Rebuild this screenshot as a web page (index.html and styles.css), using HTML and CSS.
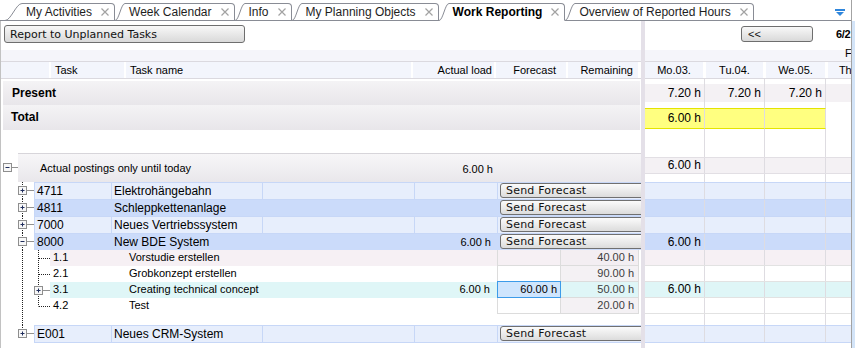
FILE: index.html
```html
<!DOCTYPE html>
<html lang="en">
<head>
    <meta charset="UTF-8">
    <meta name="viewport" content="width=device-width, initial-scale=1.0">
    <title>Work Reporting</title>
    <link rel="stylesheet" href="styles.css">
</head>
<body>
<div class="page">
    <div class="content">
        <!-- Tab strip -->
        <div class="tabbar">
            <div class="tab">
                <svg class="slant" width="17" height="18" viewBox="0 0 17 18"><path class="slant-fill" d="M0 18V17.5C6 17.5 11 0.5 17 0.5V18Z"/><path class="slant-line" d="M0 17.5C6 17.5 11 0.5 17 0.5"/><path class="slant-base" d="M0 17.5H17"/></svg>
                <div class="tab-body"><span class="tab-label">My Activities</span><svg class="tab-close" width="8" height="8"><path d="M0.5 0.5L7.5 7.5M7.5 0.5L0.5 7.5"/></svg></div>
            </div>
            <div class="tab">
                <svg class="slant" width="10" height="18" viewBox="0 0 10 18"><path class="slant-fill" d="M0 18V17.5C4 17.5 6 0.5 10 0.5V18Z"/><path class="slant-line" d="M0 17.5C4 17.5 6 0.5 10 0.5"/><path class="slant-base" d="M0 17.5H10"/></svg>
                <div class="tab-body"><span class="tab-label">Week Calendar</span><svg class="tab-close" width="8" height="8"><path d="M0.5 0.5L7.5 7.5M7.5 0.5L0.5 7.5"/></svg></div>
            </div>
            <div class="tab">
                <svg class="slant" width="10" height="18" viewBox="0 0 10 18"><path class="slant-fill" d="M0 18V17.5C4 17.5 6 0.5 10 0.5V18Z"/><path class="slant-line" d="M0 17.5C4 17.5 6 0.5 10 0.5"/><path class="slant-base" d="M0 17.5H10"/></svg>
                <div class="tab-body"><span class="tab-label">Info</span><svg class="tab-close" width="8" height="8"><path d="M0.5 0.5L7.5 7.5M7.5 0.5L0.5 7.5"/></svg></div>
            </div>
            <div class="tab">
                <svg class="slant" width="10" height="18" viewBox="0 0 10 18"><path class="slant-fill" d="M0 18V17.5C4 17.5 6 0.5 10 0.5V18Z"/><path class="slant-line" d="M0 17.5C4 17.5 6 0.5 10 0.5"/><path class="slant-base" d="M0 17.5H10"/></svg>
                <div class="tab-body"><span class="tab-label">My Planning Objects</span><svg class="tab-close" width="8" height="8"><path d="M0.5 0.5L7.5 7.5M7.5 0.5L0.5 7.5"/></svg></div>
            </div>
            <div class="tab active">
                <svg class="slant" width="10" height="18" viewBox="0 0 10 18"><path class="slant-fill" d="M0 18V17.5C4 17.5 6 0.5 10 0.5V18Z"/><path class="slant-line" d="M0 17.5C4 17.5 6 0.5 10 0.5"/></svg>
                <div class="tab-body"><span class="tab-label">Work Reporting</span><svg class="tab-close" width="8" height="8"><path d="M0.5 0.5L7.5 7.5M7.5 0.5L0.5 7.5"/></svg></div>
            </div>
            <div class="tab">
                <svg class="slant" width="10" height="18" viewBox="0 0 10 18"><path class="slant-fill" d="M0 18V17.5C4 17.5 6 0.5 10 0.5V18Z"/><path class="slant-line" d="M0 17.5C4 17.5 6 0.5 10 0.5"/><path class="slant-base" d="M0 17.5H10"/></svg>
                <div class="tab-body"><span class="tab-label">Overview of Reported Hours</span><svg class="tab-close" width="8" height="8"><path d="M0.5 0.5L7.5 7.5M7.5 0.5L0.5 7.5"/></svg></div>
            </div>
            <svg class="tab-menu" width="10" height="7" viewBox="0 0 10 7"><rect x="0" y="0" width="10" height="2"/><path d="M1 3H9L5 7Z"/></svg>
        </div>

        <div class="main">
            <!-- Left: task table -->
            <div class="tasks">
                <div class="toolbar"><button class="btn">Report to Unplanned Tasks</button></div>
                <div class="strip"></div>
                <div class="head">
                    <div class="hc"></div>
                    <div class="hc">Task</div>
                    <div class="hc">Task name</div>
                    <div class="hc num">Actual load</div>
                    <div class="hc num fc-h">Forecast</div>
                    <div class="hc num rem-h">Remaining</div>
                </div>
                <div class="sum present">Present</div>
                <div class="sum total">Total</div>
                <div class="spacer"></div>

                <div class="group">
                    <svg class="tree" width="17" height="29" viewBox="0 0 17 29"><path class="dots" d="M10.5 14.5H17"/><rect class="box" x="2.5" y="10.5" width="8" height="8"/><path class="sign" d="M4.5 14.5h4"/></svg>
                    <div class="band">
                        <span class="band-label">Actual postings only until today</span>
                        <span class="band-val">6.00 h</span>
                    </div>
                </div>

                <div class="row light">
                    <svg class="tree" width="33" height="17" viewBox="0 0 33 17"><path class="dots" d="M21.5 0V17M25.5 8.5H33"/><rect class="box" x="17.5" y="4.5" width="8" height="8"/><path class="sign" d="M19.5 8.5h4M21.5 6.5v4"/></svg>
                    <div class="cells">
                        <div class="c">4711</div><div class="c">Elektrohängebahn</div><div class="c"></div><div class="c load"></div>
                        <div class="c fc"><button class="send">Send Forecast</button></div>
                    </div>
                </div>
                <div class="row dark">
                    <svg class="tree" width="33" height="17" viewBox="0 0 33 17"><path class="dots" d="M21.5 0V17M25.5 8.5H33"/><rect class="box" x="17.5" y="4.5" width="8" height="8"/><path class="sign" d="M19.5 8.5h4M21.5 6.5v4"/></svg>
                    <div class="cells">
                        <div class="c">4811</div><div class="c">Schleppkettenanlage</div><div class="c"></div><div class="c load"></div>
                        <div class="c fc"><button class="send">Send Forecast</button></div>
                    </div>
                </div>
                <div class="row light">
                    <svg class="tree" width="33" height="17" viewBox="0 0 33 17"><path class="dots" d="M21.5 0V17M25.5 8.5H33"/><rect class="box" x="17.5" y="4.5" width="8" height="8"/><path class="sign" d="M19.5 8.5h4M21.5 6.5v4"/></svg>
                    <div class="cells">
                        <div class="c">7000</div><div class="c">Neues Vertriebssystem</div><div class="c"></div><div class="c load"></div>
                        <div class="c fc"><button class="send">Send Forecast</button></div>
                    </div>
                </div>
                <div class="row dark">
                    <svg class="tree" width="33" height="17" viewBox="0 0 33 17"><path class="dots" d="M21.5 0V17M25.5 8.5H33"/><rect class="box" x="17.5" y="4.5" width="8" height="8"/><path class="sign" d="M19.5 8.5h4"/></svg>
                    <div class="cells">
                        <div class="c">8000</div><div class="c">New BDE System</div><div class="c"></div><div class="c load">6.00 h</div>
                        <div class="c fc"><button class="send">Send Forecast</button></div>
                    </div>
                </div>

                <div class="sub">
                    <svg class="tree" width="49" height="16" viewBox="0 0 49 16"><path class="dots" d="M21.5 0V16M37.5 0V16M38 8.5H49"/></svg>
                    <div class="scells pink">
                        <div class="s">1.1</div><div class="s">Vorstudie erstellen</div><div class="s load"></div>
                        <div class="s sfc"></div><div class="s srem">40.00 h</div>
                    </div>
                </div>
                <div class="sub">
                    <svg class="tree" width="49" height="16" viewBox="0 0 49 16"><path class="dots" d="M21.5 0V16M37.5 0V16M38 8.5H49"/></svg>
                    <div class="scells">
                        <div class="s">2.1</div><div class="s">Grobkonzept erstellen</div><div class="s load"></div>
                        <div class="s sfc"></div><div class="s srem">90.00 h</div>
                    </div>
                </div>
                <div class="sub">
                    <svg class="tree" width="49" height="16" viewBox="0 0 49 16"><path class="dots" d="M21.5 0V16M37.5 0V16M41.5 8.5H49"/><rect class="box" x="33.5" y="4.5" width="8" height="8"/><path class="sign" d="M35.5 8.5h4M37.5 6.5v4"/></svg>
                    <div class="scells cyan">
                        <div class="s">3.1</div><div class="s">Creating technical concept</div><div class="s load">6.00 h</div>
                        <div class="s sfc edit">60.00 h</div><div class="s srem">50.00 h</div>
                    </div>
                </div>
                <div class="sub">
                    <svg class="tree" width="49" height="16" viewBox="0 0 49 16"><path class="dots" d="M21.5 0V16M37.5 0V8.5M38 8.5H49"/></svg>
                    <div class="scells">
                        <div class="s">4.2</div><div class="s">Test</div><div class="s load"></div>
                        <div class="s sfc"></div><div class="s srem">20.00 h</div>
                    </div>
                </div>
                <div class="gap">
                    <svg class="tree" width="33" height="11" viewBox="0 0 33 11"><path class="dots" d="M21.5 0V11"/></svg>
                </div>
                <div class="row light last">
                    <svg class="tree" width="33" height="17" viewBox="0 0 33 17"><path class="dots" d="M21.5 0V8.5M25.5 8.5H33"/><rect class="box" x="17.5" y="4.5" width="8" height="8"/><path class="sign" d="M19.5 8.5h4M21.5 6.5v4"/></svg>
                    <div class="cells">
                        <div class="c">E001</div><div class="c">Neues CRM-System</div><div class="c"></div><div class="c load"></div>
                        <div class="c fc"><button class="send">Send Forecast</button></div>
                    </div>
                </div>
            </div>

            <div class="splitter"></div>

            <!-- Right: days -->
            <div class="days">
                <div class="rtop"><button class="btn nav">&lt;&lt;</button><span class="rdate">6/2</span></div>
                <div class="rstrip"><span>F</span></div>
                <div class="rhead"><div>Mo.03.</div><div>Tu.04.</div><div>We.05.</div><div class="th">Th</div></div>
                <div class="g h5"><div></div><div></div><div></div><div></div></div>
                <div class="g pres"><div>7.20 h</div><div>7.20 h</div><div>7.20 h</div><div></div></div>
                <div class="g h6"><div></div><div></div><div></div><div></div></div>
                <div class="g tot"><div class="yellow">6.00 h</div><div class="yellow"></div><div class="yellow"></div><div></div></div>
                <div class="g h28"><div></div><div></div><div></div><div></div></div>
                <div class="g post"><div>6.00 h</div><div></div><div></div><div></div></div>
                <div class="g h8"><div></div><div></div><div></div><div></div></div>
                <div class="g lvl light"><div></div><div></div><div></div><div></div></div>
                <div class="g lvl dark"><div></div><div></div><div></div><div></div></div>
                <div class="g lvl light"><div></div><div></div><div></div><div></div></div>
                <div class="g lvl dark"><div>6.00 h</div><div></div><div></div><div></div></div>
                <div class="g srow pink"><div></div><div></div><div></div><div></div></div>
                <div class="g srow"><div></div><div></div><div></div><div></div></div>
                <div class="g srow cyan"><div>6.00 h</div><div></div><div></div><div></div></div>
                <div class="g srow"><div></div><div></div><div></div><div></div></div>
                <div class="g h11"><div></div><div></div><div></div><div></div></div>
                <div class="g lvl light last"><div></div><div></div><div></div><div></div></div>
            </div>
        </div>
    </div>
    <div class="edge"></div>
</div>
</body>
</html>
```

FILE: styles.css
```css
* {
    box-sizing: border-box;
}

body {
    margin: 0;
    width: 855px;
    height: 348px;
    overflow: hidden;
    background: #fff;
    font-family: "Liberation Sans", Arial, sans-serif;
    font-size: 12px;
    color: #000;
}

.page {
    display: flex;
    height: 348px;
}

.content {
    width: 851px;
    display: flex;
    flex-direction: column;
}

.edge {
    width: 4px;
    border-left: 1px solid #a3a3a3;
    background: linear-gradient(#fff 21px, #d3e4f8 21px);
}

/* Tabs */
.tabbar {
    height: 21px;
    flex: none;
    border-bottom: 1px solid #898c95;
    display: flex;
    align-items: flex-end;
    padding-left: 5px;
}

.tab {
    display: flex;
    height: 18px;
    margin-bottom: -1px;
}

.slant {
    flex: none;
    display: block;
}

.slant-fill {
    fill: #fff;
}

.slant-line,
.slant-base {
    fill: none;
    stroke: #898c95;
    stroke-width: 1;
}

.tab-body {
    display: flex;
    align-items: center;
    background: #fff;
    border: 1px solid #898c95;
    border-left: 0;
    border-top-right-radius: 4px;
    padding: 0 5px 0 4px;
}

.tab-label {
    white-space: nowrap;
    color: #1e1e1e;
}

.tab-close {
    margin-left: 9px;
    fill: none;
    stroke: #a2a2a2;
    stroke-width: 1.2;
}

.tab.active .tab-body {
    border-bottom-color: #fff;
}

.tab.active .tab-label {
    font-weight: bold;
    color: #000;
}

.tab-menu {
    align-self: flex-start;
    margin: 9px 6px 0 auto;
    fill: #2f86dc;
}

/* Main area */
.main {
    flex: 1;
    display: flex;
    min-height: 0;
}

.tasks {
    width: 641px;
    flex: none;
    border-left: 1px solid #c2c2c2;
    overflow: hidden;
}

.splitter {
    width: 4px;
    flex: none;
    background: #e4e0e8;
}

.days {
    width: 206px;
    flex: none;
    overflow: hidden;
}

.btn {
    display: block;
    margin: 0;
    padding: 0 0 0 5px;
    text-align: left;
    font-family: "DejaVu Sans", Verdana, sans-serif;
    font-size: 11px;
    color: #111;
    background: linear-gradient(#f8f8f8, #d9d9d9);
    border: 1px solid #6e6e6e;
    border-radius: 3px;
}

.toolbar {
    height: 29px;
    padding: 4px 0 0 3px;
}

.toolbar .btn {
    width: 241px;
    height: 18px;
}

.strip,
.rstrip {
    height: 12px;
    background: #f5f5fa;
    border-bottom: 1px solid #dbd9df;
}

.head {
    height: 17px;
    margin-bottom: 2px;
    border-bottom: 1px solid #dbd9df;
    display: grid;
    grid-template-columns: 48px 73px 285px 81px 70px 70px;
    column-gap: 2px;
    font-size: 11px;
}

.hc {
    background: #f3f5fc;
    padding-left: 4px;
    line-height: 16px;
    white-space: nowrap;
}

.hc.num {
    text-align: right;
    padding: 0 2px 0 0;
}

.hc.fc-h {
    padding-right: 10px;
}

.hc.rem-h {
    padding-right: 5px;
}

.sum {
    margin: 0 1px 0 2px;
    font-weight: bold;
    background: linear-gradient(#f4f3f5, #e8e6ea);
    padding-left: 9px;
}

.present {
    height: 24px;
    line-height: 24px;
}

.total {
    height: 25px;
    line-height: 25px;
    padding-left: 8px;
}

.spacer {
    height: 23px;
}

/* Tree connectors */
.tree {
    flex: none;
    display: block;
}

.dots {
    fill: none;
    stroke: #222;
    stroke-dasharray: 1 1;
}

.box {
    fill: #f7f7f7;
    stroke: #8e8e8e;
}

.sign {
    fill: none;
    stroke: #1f2d5c;
}

.group {
    display: flex;
    height: 29px;
}

.band {
    flex: 1;
    display: flex;
    align-items: center;
    border-top: 1px solid #d7d5da;
    background: linear-gradient(#f7f6f8, #e9e7eb);
    font-size: 11px;
}

.band-label {
    width: 396px;
    padding-left: 22px;
}

.band-val {
    width: 82px;
    text-align: right;
    padding-right: 3px;
    padding-top: 1px;
}

/* Task rows */
.row {
    display: flex;
    height: 17px;
}

.row.last {
    height: 18px;
}

.cells {
    flex: 1;
    display: grid;
    grid-template-columns: 77px 151px 152px 83px 1fr;
    border-top: 1px solid #c7d7f7;
    border-left: 1px solid #c7d7f7;
}

.row.last .cells {
    border-bottom: 1px solid #c7d7f7;
}

.light .cells,
.g.light {
    background: #e7eefc;
}

.dark .cells,
.g.dark {
    background: #cbdbfa;
}

.c {
    border-right: 1px solid #c7d7f7;
    padding-left: 2px;
    line-height: 16px;
    white-space: nowrap;
    overflow: hidden;
}

.dark .c {
    border-right-color: #cbdbfa;
}

.c.load {
    text-align: right;
    padding-right: 6px;
    font-size: 11px;
}

.c.fc {
    border-right: 0;
    padding: 0 0 0 2px;
    overflow: visible;
}

.send {
    display: block;
    width: 170px;
    height: 15px;
    margin: 0;
    padding: 0 0 0 5px;
    text-align: left;
    font-family: "DejaVu Sans", Verdana, sans-serif;
    font-size: 11px;
    line-height: 13px;
    letter-spacing: 0.2px;
    color: #111;
    background: linear-gradient(#fbfbfb, #dcdcdc);
    border: 1px solid #707070;
    border-radius: 3px;
}

/* Sub rows */
.sub {
    display: flex;
    height: 16px;
    font-size: 11px;
}

.scells {
    display: grid;
    grid-template-columns: 76px 287px 84px 64px 78px;
    width: 589px;
}

.scells.pink {
    background: #f6f0f4;
}

.scells.cyan {
    background: #dff6f7;
}

.s {
    padding-left: 3px;
    line-height: 15px;
    white-space: nowrap;
}

.s.load {
    text-align: right;
    padding-right: 7px;
}

.sfc,
.srem {
    border-bottom: 1px solid #dcdcdc;
    border-right: 1px solid #dcdcdc;
    text-align: right;
    padding-right: 3px;
}

.sfc {
    border-left: 1px solid #dcdcdc;
}

.srem {
    background: #f4f1f4;
    color: #3c3c3c;
    padding-right: 4px;
}

.pink .srem {
    background: #f3eef2;
}

.cyan .srem {
    background: transparent;
}

.sfc.edit {
    background: #cfe5fd;
    border-color: #3d9be9;
    box-shadow: 0 -1px 0 #3d9be9;
}

.gap {
    height: 11px;
}

/* Right pane */
.rtop {
    height: 29px;
    padding-top: 5px;
    display: flex;
    align-items: flex-start;
}

.nav {
    flex: none;
    width: 72px;
    height: 16px;
    margin-left: 96px;
    padding-left: 6px;
    font-family: "Liberation Sans", Arial, sans-serif;
}

.rdate {
    flex: none;
    margin-left: 23px;
    font-size: 11px;
    font-weight: bold;
    line-height: 16px;
    letter-spacing: -0.3px;
    white-space: nowrap;
}

.rstrip span {
    display: block;
    padding-left: 200px;
    font-size: 11px;
    line-height: 6px;
}

.rhead {
    height: 17px;
    border-bottom: 1px solid #dbd9df;
    display: grid;
    grid-template-columns: 61px 60px 62px 23px;
    font-size: 11px;
}

.rhead div {
    background: #f3f5fc;
    border-right: 3px solid #fff;
    text-align: center;
    line-height: 16px;
    white-space: nowrap;
}

.rhead .th {
    border-right: 0;
    text-align: left;
    padding-left: 11px;
    letter-spacing: -0.3px;
}

.g {
    display: grid;
    grid-template-columns: 60px 60px 61px 25px;
}

.g div {
    border-right: 1px solid #dedce1;
    text-align: right;
    padding-right: 3px;
    white-space: nowrap;
}

.g div:last-child {
    border-right: 0;
}

.h5 { height: 5px; }
.h6 { height: 6px; }
.h8 { height: 8px; }
.h11 { height: 11px; }
.h28 { height: 28px; }

.g.pres {
    height: 18px;
    line-height: 18px;
    background: #f4f1f4;
}

.g.tot {
    height: 21px;
    line-height: 19px;
}

.g .yellow {
    background: #ffff80;
    border-top: 1px solid #e4e400;
    border-bottom: 1px solid #e4e400;
}

.g.post {
    height: 17px;
    line-height: 15px;
    background: #f4f1f4;
    border-top: 1px solid #e2dfe4;
    border-bottom: 1px solid #e2dfe4;
}

.g.lvl {
    height: 17px;
    line-height: 16px;
    border-top: 1px solid #c7d7f7;
}

.g.lvl.last {
    height: 18px;
    border-bottom: 1px solid #c7d7f7;
}

.g.srow {
    height: 16px;
    line-height: 15px;
    border-bottom: 1px solid #e2e2e2;
}

.g.pink {
    background: #f6f0f4;
}

.g.cyan {
    background: #dff6f7;
}
```
